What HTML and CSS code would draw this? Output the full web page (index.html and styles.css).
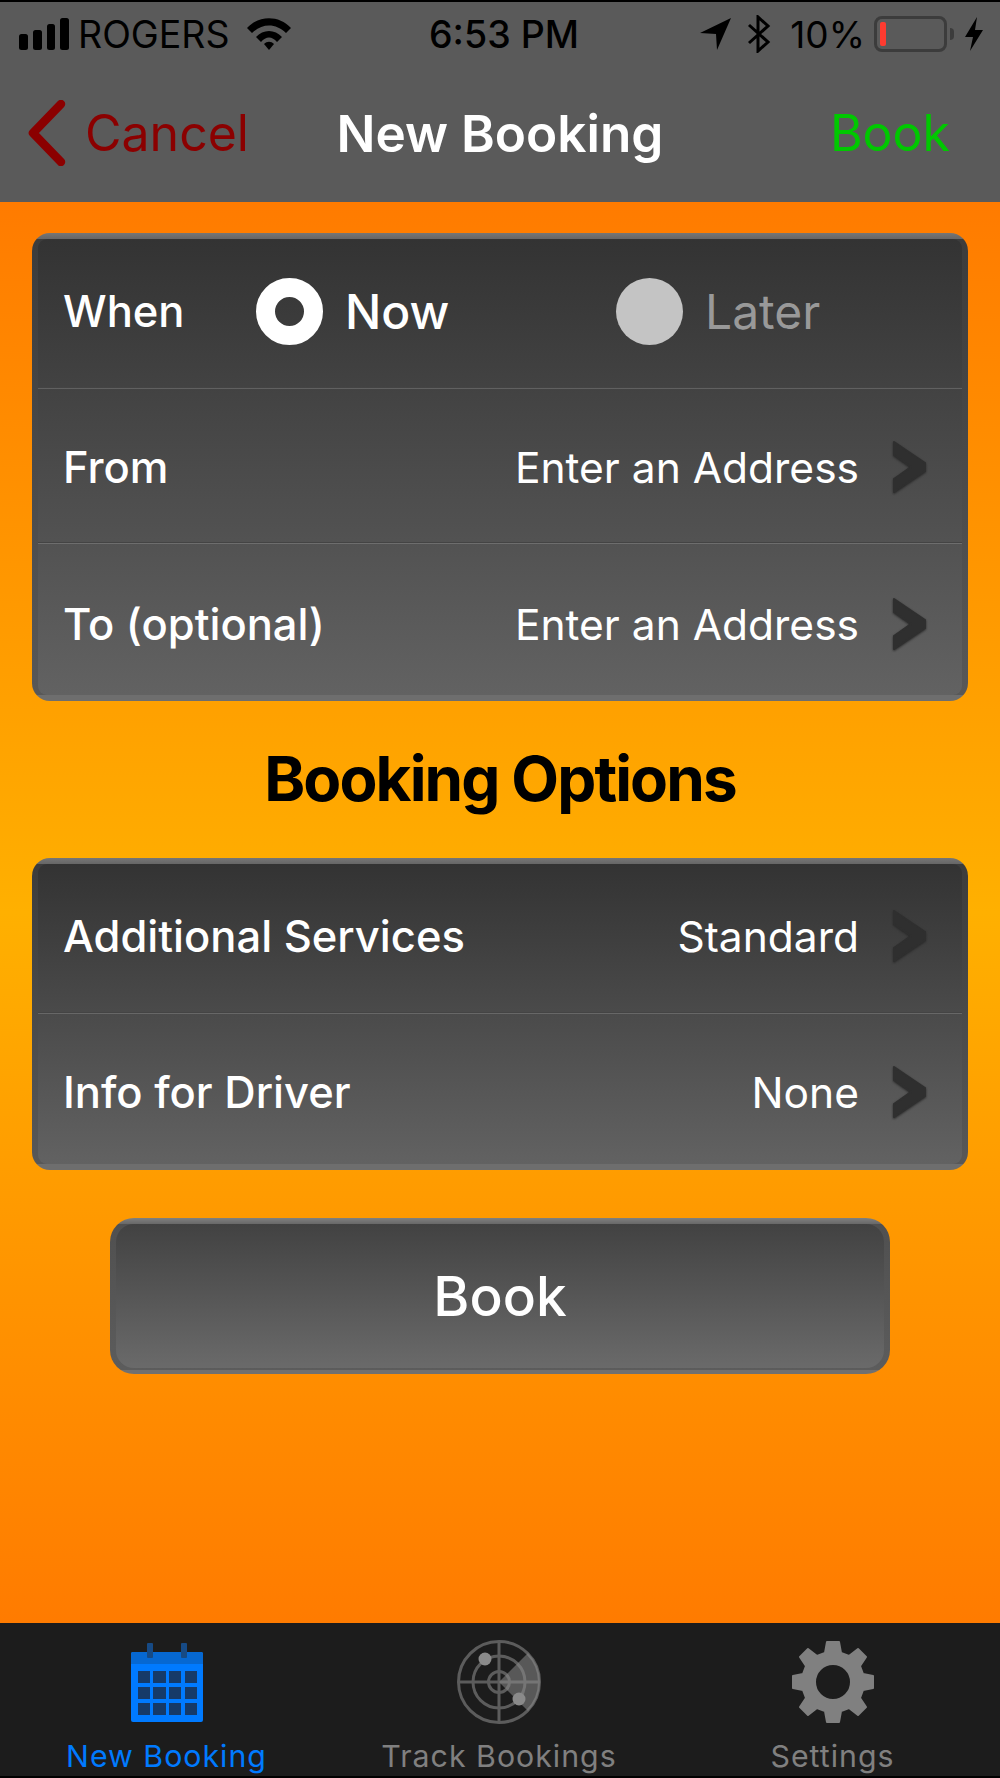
FILE: index.html
```html
<!DOCTYPE html>
<html lang="en">
<head>
  <meta charset="UTF-8" />
  <title>New Booking</title>
  <link rel="stylesheet" href="styles.css">
</head>
<body>
  <header class="topbar">
    <div class="status">
      <div class="status-left">
        <svg class="signal" width="50" height="32" viewBox="0 0 50 32"><rect x="0" y="16" width="9" height="16" rx="2.5"/><rect x="14" y="12" width="9" height="20" rx="2.5"/><rect x="28" y="6" width="8" height="26" rx="2.5"/><rect x="41" y="0" width="9" height="32" rx="2.5"/></svg>
        <span class="carrier">ROGERS</span>
        <svg class="wifi" width="44" height="32" viewBox="0 0 44 32"><path d="M0 10 C12 -3 32 -3 44 10 L39 15 C29 5 15 5 5 15Z"/><path d="M9 19 C16 11 28 11 35 19 L30 24 C25 18 19 18 14 24Z"/><path d="M17 26 C20 23 24 23 27 26 L22 32Z"/></svg>
      </div>
      <div class="clock">6:53 PM</div>
      <div class="status-right">
        <svg class="loc" width="32" height="34" viewBox="0 0 32 34"><path d="M0 16 L31 1 L17 33 L16 17Z"/></svg>
        <svg class="bt" width="24" height="38" viewBox="0 0 24 38"><path d="M2 10 L21 27 L11 36 L11 2 L21 11 L2 28" fill="none" stroke="#000" stroke-width="3"/></svg>
        <span class="percent">10%</span>
        <span class="battery"><span class="battery-fill"></span></span>
        <span class="battery-tip"></span>
        <svg class="bolt" width="20" height="34" viewBox="0 0 20 34"><path d="M13 0 L1 20 L9 20 L6 34 L19 13 L11 13Z"/></svg>
      </div>
    </div>
    <nav class="navbar">
      <div class="nav-cancel">
        <svg width="40" height="66" viewBox="0 0 40 66"><path d="M34 4 L6 33 L34 62" fill="none" stroke="#8b0000" stroke-width="8.5" stroke-linecap="round" stroke-linejoin="round"/></svg>
        <span>Cancel</span>
      </div>
      <div class="nav-title">New Booking</div>
      <div class="nav-book">Book</div>
    </nav>
  </header>

  <main class="content">
    <section class="card">
      <div class="card-inner">
        <div class="row row-first">
          <span class="label">When</span>
          <div class="radios">
            <div class="radio"><span class="dot dot-on"></span><span class="radio-text">Now</span></div>
            <div class="radio radio-off"><span class="dot"></span><span class="radio-text">Later</span></div>
          </div>
        </div>
        <div class="row">
          <span class="label">From</span>
          <span class="value">Enter an Address</span>
          <svg class="chev" width="36" height="56" viewBox="0 0 36 56"><path d="M2 3 L33 24 L33 32 L2 53 L2 40 L19 28 L2 16Z"/></svg>
        </div>
        <div class="row row-last">
          <span class="label">To (optional)</span>
          <span class="value">Enter an Address</span>
          <svg class="chev" width="36" height="56" viewBox="0 0 36 56"><path d="M2 3 L33 24 L33 32 L2 53 L2 40 L19 28 L2 16Z"/></svg>
        </div>
      </div>
    </section>

    <h2 class="options-title">Booking Options</h2>

    <section class="card">
      <div class="card-inner">
        <div class="row row-first">
          <span class="label">Additional Services</span>
          <span class="value">Standard</span>
          <svg class="chev" width="36" height="56" viewBox="0 0 36 56"><path d="M2 3 L33 24 L33 32 L2 53 L2 40 L19 28 L2 16Z"/></svg>
        </div>
        <div class="row row-last row-short">
          <span class="label">Info for Driver</span>
          <span class="value">None</span>
          <svg class="chev" width="36" height="56" viewBox="0 0 36 56"><path d="M2 3 L33 24 L33 32 L2 53 L2 40 L19 28 L2 16Z"/></svg>
        </div>
      </div>
    </section>

    <div class="book-btn"><div class="book-inner">Book</div></div>
  </main>

  <footer class="tabs">
    <div class="tab tab-active">
      <svg class="icon-cal" width="72" height="80" viewBox="0 0 72 80">
        <rect x="0" y="9" width="72" height="70" rx="2" fill="#007aff"/>
        <path d="M0 11a2 2 0 0 1 2-2H70a2 2 0 0 1 2 2V21H0Z" fill="#0668d2"/>
        <rect x="16" y="0" width="6" height="15" rx="1" fill="#164a85"/>
        <rect x="50" y="0" width="6" height="15" rx="1" fill="#164a85"/>
        <g fill="#163a68">
          <rect x="7" y="28" width="12" height="12"/><rect x="22" y="28" width="13" height="12"/><rect x="38" y="28" width="12" height="12"/><rect x="54" y="28" width="12" height="12"/>
          <rect x="7" y="44" width="12" height="12"/><rect x="22" y="44" width="13" height="12"/><rect x="38" y="44" width="12" height="12"/><rect x="54" y="44" width="12" height="12"/>
          <rect x="7" y="60" width="12" height="12"/><rect x="22" y="60" width="13" height="12"/><rect x="38" y="60" width="12" height="12"/><rect x="54" y="60" width="12" height="12"/>
        </g>
      </svg>
      <span>New Booking</span>
    </div>
    <div class="tab">
      <svg width="84" height="84" viewBox="0 0 84 84">
        <g fill="none" stroke="#5c5c5c" stroke-width="3">
          <circle cx="42" cy="42" r="40.5"/><circle cx="42" cy="42" r="26"/><circle cx="42" cy="42" r="10.5"/>
          <path d="M1 42H83M42 1V83"/>
        </g>
        <path d="M42 42 L71 13 A41 41 0 0 1 71 71Z" fill="#8a8a8a" fill-opacity="0.55"/>
        <circle cx="28" cy="19" r="6.5" fill="#8a8a8a"/>
        <circle cx="62" cy="59" r="6.5" fill="#8a8a8a"/>
      </svg>
      <span>Track Bookings</span>
    </div>
    <div class="tab">
      <svg class="icon-gear" width="82" height="82" viewBox="-41 -41 82 82">
        <path fill-rule="evenodd" fill="#808080" stroke="#808080" stroke-width="2" stroke-linejoin="round" d="M-6 -40 H6 L8 -29 L16 -26 L25 -33 L33 -25 L27 -16 L30 -8 L40 -6 V6 L30 8 L27 16 L33 25 L25 33 L16 26 L8 29 L6 40 H-6 L-8 29 L-16 26 L-25 33 L-33 25 L-27 16 L-30 8 L-40 6 V-6 L-30 -8 L-27 -16 L-33 -25 L-25 -33 L-16 -26 L-8 -29Z M0 -18 A18 18 0 1 0 0 18 A18 18 0 1 0 0 -18Z"/>
      </svg>
      <span>Settings</span>
    </div>
  </footer>
</body>
</html>
```

FILE: styles.css
```css
* {
  box-sizing: border-box;
}
html, body {
  margin: 0;
  height: 100%;
}
body {
  width: 1000px;
  height: 1778px;
  display: flex;
  flex-direction: column;
  font-family: Inter, "Noto Sans", sans-serif;
  background-color: #000;
  overflow: hidden;
}

/* top bar */
.topbar {
  height: 200px;
  margin-top: 2px;
  background-color: #5a5a5a;
  flex: none;
}
.status {
  height: 64px;
  padding: 0 16px 0 19px;
  display: flex;
  align-items: center;
  color: #000;
}
.status-left, .status-right {
  display: flex;
  align-items: center;
}
.status-left {
  flex: none;
  width: 410px;
}
.status-right {
  margin-left: auto;
}
.signal {
  margin-right: 9px;
}
.carrier {
  font-size: 37.5px;
  margin-right: 17px;
}
.clock {
  font-size: 37.5px;
  font-weight: 500;
}
.loc {
  margin-right: 15px;
}
.bt {
  margin-right: 19px;
}
.bolt {
  margin-left: 10px;
}
.percent {
  font-size: 37px;
  margin-right: 9px;
}
.battery {
  width: 73px;
  height: 36px;
  border: 3px solid #3c3c3c;
  border-radius: 8px;
  padding: 3px;
  display: block;
}
.battery-fill {
  display: block;
  width: 6px;
  height: 100%;
  background-color: #ff3b30;
  border-radius: 2px;
}
.battery-tip {
  width: 4px;
  height: 12px;
  margin-left: 3px;
  background-color: #3c3c3c;
  border-radius: 0 4px 4px 0;
}
.navbar {
  height: 136px;
  padding: 0 27px 2px;
  display: grid;
  grid-template-columns: 1fr auto 1fr;
  align-items: center;
  font-size: 50px;
}
.nav-cancel {
  display: flex;
  align-items: center;
  gap: 18px;
  color: #8b0000;
}
.nav-title {
  color: #fff;
  font-size: 51.3px;
  font-weight: 600;
}
.nav-book {
  color: #00c800;
  text-align: right;
  padding-right: 23px;
}

/* orange area */
.content {
  flex: 1;
  padding: 31px 32px 0;
  background: linear-gradient(#ff7b00, #ffb000 50%, #ff7b00);
}
.card {
  padding: 6px;
  border-radius: 18px;
  background: linear-gradient(#767676, #666 6px, #3c3c3c 6px, #585858 calc(100% - 6px), #6e6e6e calc(100% - 6px));
}
.card-inner {
  border-radius: 9px;
  background: linear-gradient(#333, #626262);
}
.row {
  height: 155px;
  padding: 4px 34px 0 25px;
  display: flex;
  align-items: center;
  font-size: 42.5px;
  color: #fff;
  border-top: 1px solid #444;
  box-shadow: inset 0 1px 0 rgba(255, 255, 255, 0.16);
}
.row-first {
  height: 148px;
  padding-top: 0;
  padding-bottom: 4px;
  border-top: none;
  box-shadow: none;
}
.row-last {
  height: 153px;
  padding-top: 10px;
}
.row-short {
  height: 152px;
  padding-top: 7px;
}
.label {
  flex: none;
  font-size: 43.5px;
  font-weight: 550;
  margin-right: auto;
}
.value {
  margin-right: 33px;
}
.chev {
  fill: #2f2f2f;
  stroke: #2f2f2f;
  stroke-width: 2;
  stroke-linejoin: round;
  filter: drop-shadow(0 1px 1px #2a2a2a);
}
.radios {
  flex: none;
  display: flex;
  width: 672px;
}
.radio {
  flex: none;
  width: 360px;
  display: flex;
  align-items: center;
  gap: 22px;
  font-size: 48px;
  font-weight: 550;
}
.radio-off {
  color: #999;
  font-weight: 400;
}
.dot {
  flex: none;
  width: 67px;
  height: 67px;
  border-radius: 50%;
  background-color: #c4c4c4;
}
.dot-on {
  background-color: transparent;
  border: 19px solid #fff;
}
.options-title {
  margin: 0;
  height: 157px;
  line-height: 155px;
  text-align: center;
  font-size: 62px;
  font-weight: 700;
  letter-spacing: -1.9px;
  color: #000;
}
.book-btn {
  width: 780px;
  height: 156px;
  margin: 48px auto 0;
  padding: 6px;
  border-radius: 24px;
  background: linear-gradient(#808080, #686868 6px, #505050 6px, #5c5c5c calc(100% - 4px), #707070 calc(100% - 4px));
}
.book-inner {
  height: 100%;
  border-radius: 18px;
  background: linear-gradient(#424242, #6a6a6a);
  display: flex;
  align-items: center;
  justify-content: center;
  color: #fff;
  font-size: 55px;
  font-weight: 550;
}

/* bottom tabs */
.tabs {
  height: 153px;
  margin-bottom: 2px;
  flex: none;
  display: grid;
  grid-template-columns: 333px 332px 335px;
  background-color: #1c1c1c;
  padding-top: 17px;
}
.tab {
  display: flex;
  flex-direction: column;
  align-items: center;
  justify-content: space-between;
  padding-bottom: 2px;
  font-size: 30.3px;
  letter-spacing: 1px;
  color: #808080;
}
.tab-active {
  color: #007aff;
}
.icon-cal {
  margin-top: 3px;
}
.icon-gear {
  margin-top: 1px;
}
```
